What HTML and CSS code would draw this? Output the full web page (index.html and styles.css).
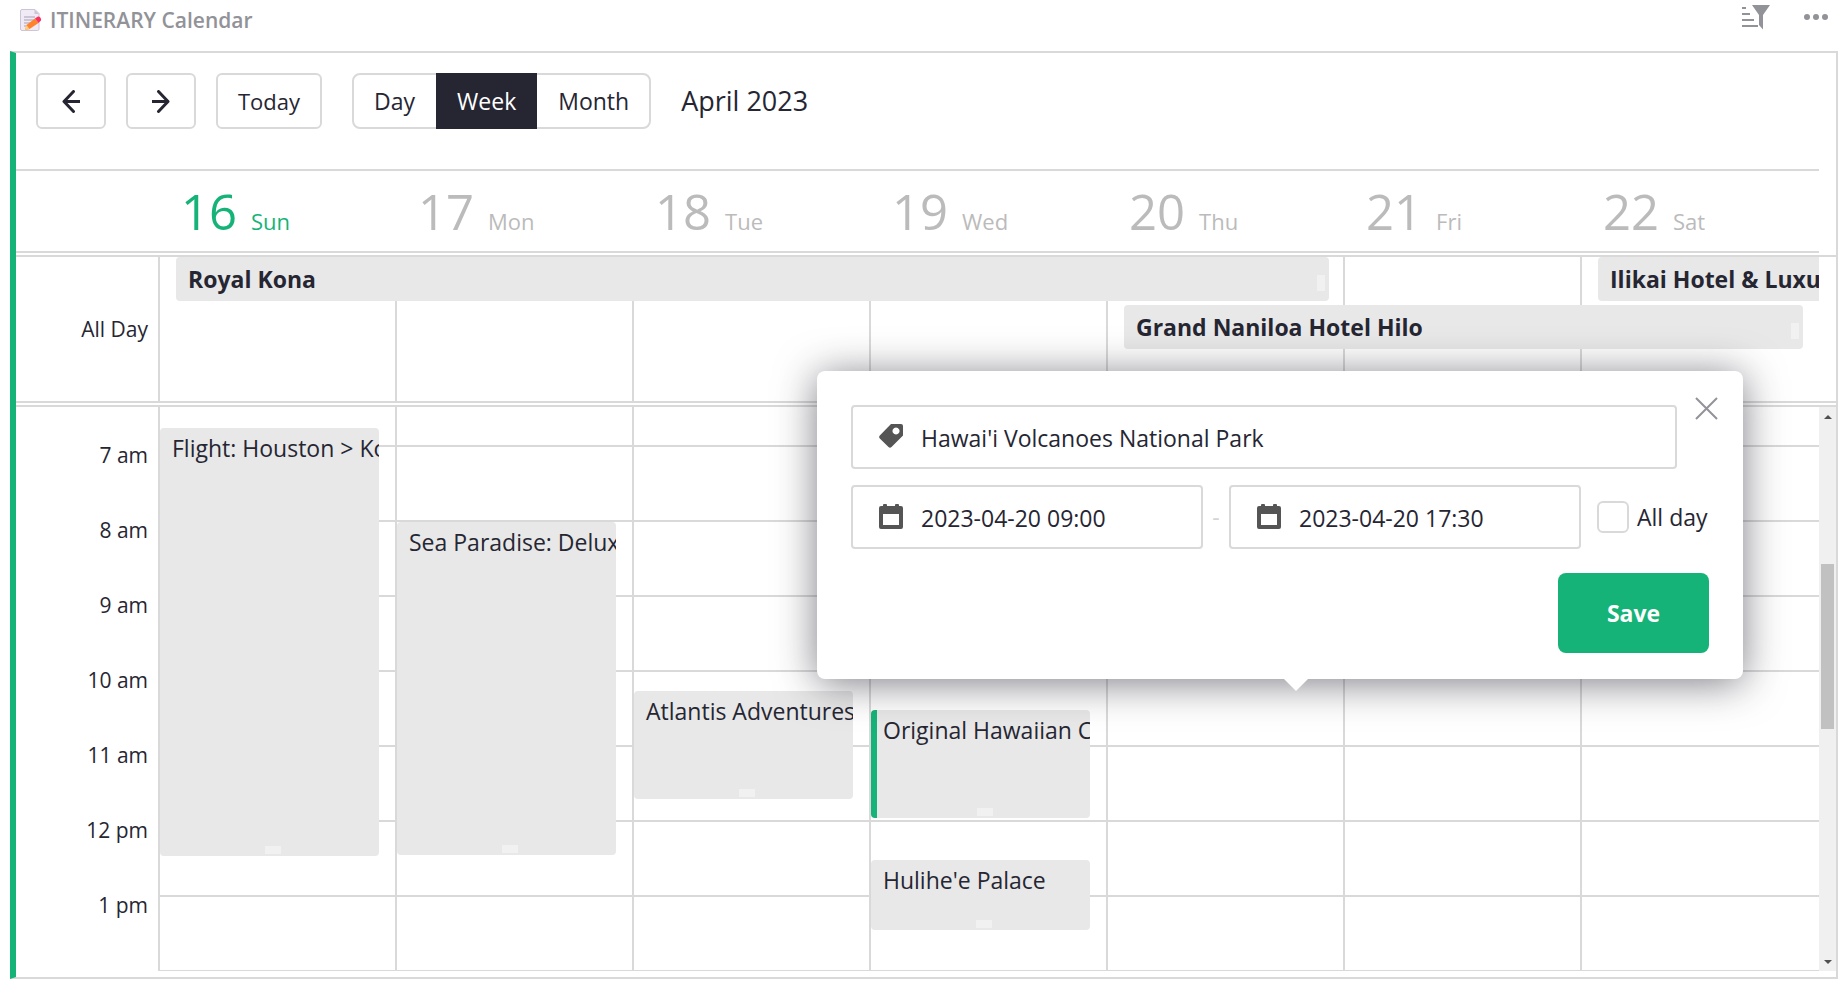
FILE: index.html
```html
<!DOCTYPE html>
<html lang="en">
<head>
<meta charset="utf-8">
<title>ITINERARY Calendar</title>
<meta name="viewport" content="width=device-width, initial-scale=1">
<link rel="stylesheet" href="styles.css">
</head>
<body>
<header class="section-head">
  <svg class="memo-icon" viewBox="0 0 22 22" aria-hidden="true">
    <path d="M2 0.5h13l4 4V20a1.5 1.5 0 0 1-1.500 1.500H2A1.500 1.500 0 0 1 .5 20V2A1.500 1.500 0 0 1 2 .5z" fill="#f0eaf6" stroke="#cdc4d6"/>
    <path d="M14.500 .5v4.500H19z" fill="#cdc4d6"/>
    <path d="M4 8h11M4 11h11M4 14h8M4 17h4" stroke="#a79fb5" stroke-width="1"/>
    <path d="M5 21l1.500-5L15 9.500l3.500 4.500-9 6z" fill="#ff822d"/>
    <path d="M5 21l1.500-5 3 4z" fill="#ffce7c"/>
    <path d="M15 9.500l2.500-1.800q1.500-.7 2.800.8t.6 3L18.500 14z" fill="#f8315f"/>
  </svg>
  <h1 class="section-title">ITINERARY Calendar</h1>
  <button class="icon-button" aria-label="Sort and filter">
    <svg width="28" height="25" viewBox="0 0 28 25" aria-hidden="true"><path d="M0 3h4M0 9h8M0 15h12M0 21h16" stroke="#929299" stroke-width="2"/><path d="M10 0h18l-7 10v14.500L17 20V10z" fill="#929299"/></svg>
  </button>
  <button class="icon-button" aria-label="More">
    <svg width="24" height="6" viewBox="0 0 24 6" aria-hidden="true"><g fill="#929299"><circle cx="3" cy="3" r="3"/><circle cx="12" cy="3" r="3"/><circle cx="21" cy="3" r="3"/></g></svg>
  </button>
</header>

<main class="calendar">
  <nav class="toolbar">
    <button class="btn arrow" aria-label="Previous"><svg width="18" height="23" viewBox="0 0 18 23" fill="none" stroke="#262633" stroke-width="3" aria-hidden="true"><path d="M18 11.500H2"/><path d="M11.500 1.500L2 11.500l9.500 10" stroke-linecap="round" stroke-linejoin="round"/></svg></button>
    <button class="btn arrow" aria-label="Next"><svg width="18" height="23" viewBox="0 0 18 23" fill="none" stroke="#262633" stroke-width="3" aria-hidden="true"><path d="M0 11.500h16"/><path d="M6.500 1.500l9.500 10-9.500 10" stroke-linecap="round" stroke-linejoin="round"/></svg></button>
    <button class="btn">Today</button>
    <div class="views">
      <button class="view">Day</button>
      <button class="view active" aria-pressed="true">Week</button>
      <button class="view">Month</button>
    </div>
    <h2 class="month">April 2023</h2>
  </nav>

  <div class="days">
    <div class="day today"><b class="num">16</b>Sun</div>
    <div class="day"><b class="num">17</b>Mon</div>
    <div class="day"><b class="num">18</b>Tue</div>
    <div class="day"><b class="num">19</b>Wed</div>
    <div class="day"><b class="num">20</b>Thu</div>
    <div class="day"><b class="num">21</b>Fri</div>
    <div class="day"><b class="num">22</b>Sat</div>
  </div>

  <section class="allday">
    <div class="gutter allday-label">All Day</div>
    <div class="columns">
      <div class="col"></div><div class="col"></div><div class="col"></div><div class="col"></div><div class="col"></div><div class="col"></div><div class="col"></div>
      <div class="bars">
        <div class="bar kona">Royal Kona<i class="grip"></i></div>
        <div class="bar ilikai">Ilikai Hotel &amp; Luxu</div>
        <div class="bar hilo">Grand Naniloa Hotel Hilo<i class="grip"></i></div>
      </div>
    </div>
  </section>

  <section class="timegrid">
    <div class="gutter hours">
      <span>7 am</span><span>8 am</span><span>9 am</span><span>10 am</span><span>11 am</span><span>12 pm</span><span>1 pm</span>
    </div>
    <div class="columns lines">
      <div class="col"><div class="event" style="top:21px;height:428px">Flight: Houston &gt; Ko<i class="grip"></i></div></div>
      <div class="col"><div class="event" style="top:115px;height:333px">Sea Paradise: Deluxe<i class="grip"></i></div></div>
      <div class="col"><div class="event" style="top:284px;height:108px">Atlantis Adventures<i class="grip"></i></div></div>
      <div class="col"><div class="event selected" style="top:303px;height:108px">Original Hawaiian C<i class="grip"></i></div><div class="event" style="top:453px;height:70px">Hulihe'e Palace<i class="grip"></i></div></div>
      <div class="col"></div>
      <div class="col"></div>
      <div class="col"></div>
    </div>
    <div class="scrollbar" aria-hidden="true">
      <svg width="8" height="4" viewBox="0 0 8 4"><path d="M0 4l4-4 4 4z" fill="#505050"/></svg>
      <div class="track"><div class="thumb"></div></div>
      <svg width="8" height="4" viewBox="0 0 8 4"><path d="M0 0l4 4 4-4z" fill="#505050"/></svg>
    </div>
  </section>

  <form class="popup">
    <div class="row">
      <label class="field grow">
        <svg width="24" height="24" viewBox="0 0 24 24" aria-hidden="true"><path fill-rule="evenodd" d="M12 0h10a2 2 0 0 1 2 2v9.500L12.500 23q-1.500 1.500-3 0L.8 14.500q-1.300-1.500 0-3zM17 3.500a3.500 3.500 0 1 0 .01 0z" fill="#555"/></svg>
        <input type="text" value="Hawai'i Volcanoes National Park" aria-label="Subject">
      </label>
      <button class="close" type="button" aria-label="Close"><svg width="23" height="23" viewBox="0 0 23 23" aria-hidden="true"><path d="M1 1l21 21M22 1L1 22" stroke="#929299" stroke-width="2"/></svg></button>
    </div>
    <div class="row">
      <label class="field date">
        <svg width="24" height="25" viewBox="0 0 24 25" aria-hidden="true"><path fill-rule="evenodd" d="M4 2V1q0-1 1-1h2q1 0 1 1v1h8V1q0-1 1-1h2q1 0 1 1v1h2q2 0 2 2v19q0 2-2 2H2q-2 0-2-2V4q0-2 2-2zM4 10v11h16V10z" fill="#555"/></svg>
        <input type="text" value="2023-04-20 09:00" aria-label="Start date">
      </label>
      <span class="dash">-</span>
      <label class="field date">
        <svg width="24" height="25" viewBox="0 0 24 25" aria-hidden="true"><path fill-rule="evenodd" d="M4 2V1q0-1 1-1h2q1 0 1 1v1h8V1q0-1 1-1h2q1 0 1 1v1h2q2 0 2 2v19q0 2-2 2H2q-2 0-2-2V4q0-2 2-2zM4 10v11h16V10z" fill="#555"/></svg>
        <input type="text" value="2023-04-20 17:30" aria-label="End date">
      </label>
      <label class="check"><input type="checkbox">All day</label>
    </div>
    <div class="actions"><button class="save" type="button">Save</button></div>
    <svg class="tip" width="28" height="14" viewBox="0 0 28 14" aria-hidden="true"><path d="M0 0h28L14 14z" fill="#fff"/></svg>
  </form>
</main>
</body>
</html>
```

FILE: styles.css
```css
* { box-sizing: border-box; }

body {
  margin: 0;
  height: 100vh;
  padding: 0 8px 6px 10px;
  display: flex;
  flex-direction: column;
  background: #fff;
  color: #262633;
  font: 22px/30px "Open Sans", "Noto Sans", sans-serif;
}

button, input { font: inherit; color: inherit; }
button { cursor: pointer; }

.section-head {
  flex: none;
  height: 51px;
  padding: 0 10px 11px;
  display: flex;
  align-items: center;
}
.memo-icon { width: 22px; height: 22px; margin-right: 8px; }
.section-title { flex: 1; margin: 0; font-size: 21px; font-weight: 600; color: #929299; }
.icon-button { display: flex; margin-left: 34px; padding: 0 0 6px; border: 0; background: none; }

.calendar {
  position: relative;
  flex: 1;
  min-height: 0;
  display: flex;
  flex-direction: column;
  border: 2px solid #d9d9d9;
  border-left: 6px solid #16b378;
  padding-bottom: 6px;
}

.toolbar { flex: none; display: flex; align-items: center; gap: 20px; padding: 20px 20px 40px; }
.btn, .views { height: 56px; border: 2px solid #d9d9d9; border-radius: 6px; background: #fff; }
.btn { display: flex; align-items: center; justify-content: center; padding: 0 20px; }
.arrow { width: 70px; }
.views { display: flex; margin-left: 10px; border-radius: 8px; }
.view { margin: -2px 0; padding: 0 21px; border: 0; background: none; font-size: 23px; }
.view:first-child { padding-left: 20px; }
.view:last-child { padding-right: 20px; }
.active { background: #262633; color: #fff; }
.month { margin: 0 0 0 10px; font-size: 27px; font-weight: 400; }

.days {
  flex: none;
  display: grid;
  grid-template-columns: repeat(7, 1fr);
  height: 84px;
  margin-right: 17px;
  padding-left: 144px;
  border: solid #d9d9d9;
  border-width: 2px 0;
}
.day { display: flex; align-items: baseline; gap: 14px; padding: 7px 0 0 21px; color: #bbb; }
.num { font-size: 49px; line-height: 66px; font-weight: 400; }
.today { color: #16b378; }

.gutter {
  flex: none;
  width: 144px;
  padding-right: 10px;
  border-right: 2px solid #d9d9d9;
  font-size: 21px;
  text-align: right;
}
.columns { position: relative; flex: 1; display: grid; grid-template-columns: repeat(7, 1fr); overflow: hidden; }
.col { position: relative; border-right: 2px solid #d9d9d9; }
.col:nth-child(7) { border-right: 0; }

.allday {
  flex: none;
  display: flex;
  height: 148px;
  margin-top: 2px;
  padding-right: 17px;
  border: solid #d9d9d9;
  border-width: 2px 0;
}
.allday-label { display: flex; align-items: center; justify-content: flex-end; }
.bars {
  position: absolute;
  inset: 0;
  display: grid;
  grid-template-columns: repeat(7, 1fr);
  grid-template-rows: 44px 44px;
  row-gap: 4px;
}
.bar {
  position: relative;
  margin: 0 16px;
  padding: 0 12px;
  border-radius: 4px;
  background: #e8e8e8;
  font-size: 23px;
  font-weight: 700;
  line-height: 44px;
  white-space: nowrap;
  overflow: hidden;
}
.kona { grid-area: 1 / 1 / 2 / 6; }
.ilikai { grid-area: 1 / 7 / 2 / 8; margin-right: 0; padding-right: 0; border-radius: 4px 0 0 4px; }
.hilo { grid-area: 2 / 5 / 3 / 8; }
.grip { position: absolute; background: #f1f1f1; }
.bar .grip { right: 4px; top: 18px; width: 8px; height: 16px; }

.timegrid {
  flex: 1;
  min-height: 0;
  display: flex;
  margin-top: 2px;
  border-top: 2px solid #d9d9d9;
}
.hours { display: flex; flex-direction: column; gap: 45px; padding-top: 33px; overflow: hidden; }
.hours span { flex: none; }
.lines {
  border-bottom: 1px solid #d9d9d9;
  background: repeating-linear-gradient(#d9d9d9 0 2px, transparent 2px 75px) 0 38px no-repeat;
}
.event {
  position: absolute;
  left: 0;
  right: 16px;
  padding: 5px 0 0 12px;
  border-radius: 4px;
  background: #e8e8e8;
  font-size: 23px;
  white-space: nowrap;
  overflow: hidden;
}
.event .grip { left: 48%; bottom: 2px; width: 16px; height: 8px; }
.selected { padding-left: 6px; border-left: 6px solid #16b378; }
.selected .grip { left: 47%; }

.scrollbar {
  flex: none;
  width: 17px;
  padding: 8px 0 7px;
  display: flex;
  flex-direction: column;
  align-items: center;
  background: #f0f0f0;
}
.track { flex: 1; width: 13px; padding: 145px 0; }
.thumb { height: 165px; background: #c1c1c1; }

.popup {
  position: absolute;
  top: 318px;
  right: 93px;
  width: 926px;
  padding: 34px 34px 26px;
  border-radius: 8px;
  background: #fff;
  box-shadow: 0 4px 40px rgba(38, 38, 51, 0.6);
  font-size: 23px;
}
.row { display: flex; align-items: center; margin-bottom: 16px; }
.field { display: flex; align-items: center; height: 64px; padding: 0 26px; border: 2px solid #d9d9d9; border-radius: 4px; }
.field svg { flex: none; margin-bottom: 2px; }
.field input { flex: 1; min-width: 0; margin-left: 18px; padding: 2px 0 0; border: 0; outline: 0; background: none; }
.grow { flex: 1; }
.date { width: 352px; }
.dash { width: 26px; text-align: center; color: #d4d4d4; }
.close { align-self: flex-start; display: flex; margin: -8px -9px 0 18px; padding: 0; border: 0; background: none; }
.check { display: flex; align-items: center; gap: 8px; margin-left: 16px; white-space: nowrap; }
.check input { appearance: none; width: 32px; height: 32px; margin: 0; border: 2px solid #d9d9d9; border-radius: 6px; background: #fff; }
.actions { display: flex; justify-content: flex-end; padding-top: 8px; }
.save { width: 151px; height: 80px; border: 0; border-radius: 8px; background: #16b378; color: #fff; font-weight: 700; }
.tip { position: absolute; top: 100%; left: 465px; margin-top: -2px; }
```
